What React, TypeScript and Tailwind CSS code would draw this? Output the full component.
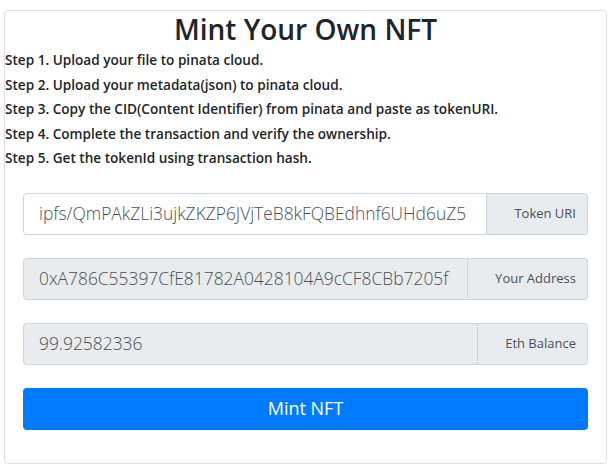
import React from "react";

const steps = [
  "Step 1. Upload your file to pinata cloud.",
  "Step 2. Upload your metadata(json) to pinata cloud.",
  "Step 3. Copy the CID(Content Identifier) from pinata and paste as tokenURI.",
  "Step 4. Complete the transaction and verify the ownership.",
  "Step 5. Get the tokenId using transaction hash.",
];

interface FieldProps {
  value: string;
  label: string;
  disabled?: boolean;
}

const Field = ({ value, label, disabled }: FieldProps) => (
  <div className="flex h-[42px] w-full">
    <input
      readOnly
      value={value}
      className={`min-w-0 flex-1 rounded-l-[4px] border border-[#ced4da] pl-[15px] pr-[2px] text-[17.4px] font-light text-[#495057] outline-none ${
        disabled ? "bg-[#e9ecef]" : "bg-white"
      }`}
    />
    <span className="flex items-center whitespace-nowrap rounded-r-[4px] border border-l-0 border-[#ced4da] bg-[#e9ecef] pl-[27px] pr-[11px] text-[13px] text-[#495057]">
      {label}
    </span>
  </div>
);

export default function App() {
  return (
    <div
      className="h-[470px] w-[613px] bg-white pl-[4px] pt-[10px]"
      style={{ fontFamily: '"Open Sans", "Noto Sans", sans-serif' }}
    >
      <div className="h-[454px] w-[603px] rounded-[4px] border border-[#dfdfdf]">
        <h1 className="text-center text-[28px] font-semibold leading-[37px] text-[#212529]">
          Mint Your Own NFT
        </h1>
        <div className="flex flex-col text-[13.6px] font-semibold leading-[24.5px] text-[#212529]">
          {steps.map((s) => (
            <p key={s}>{s}</p>
          ))}
        </div>
        <div className="mt-[22px] flex flex-col gap-[23px] px-[18px]">
          <Field value="ipfs/QmPAkZLi3ujkZKZP6JVjTeB8kFQBEdhnf6UHd6uZ5" label="Token URI" />
          <Field value="0xA786C55397CfE81782A0428104A9cCF8CBb7205f" label="Your Address" disabled />
          <Field value="99.92582336" label="Eth Balance" disabled />
          <button className="h-[42px] w-full rounded-[4px] bg-[#007bff] text-[18px] text-white">
            Mint NFT
          </button>
        </div>
      </div>
    </div>
  );
}
